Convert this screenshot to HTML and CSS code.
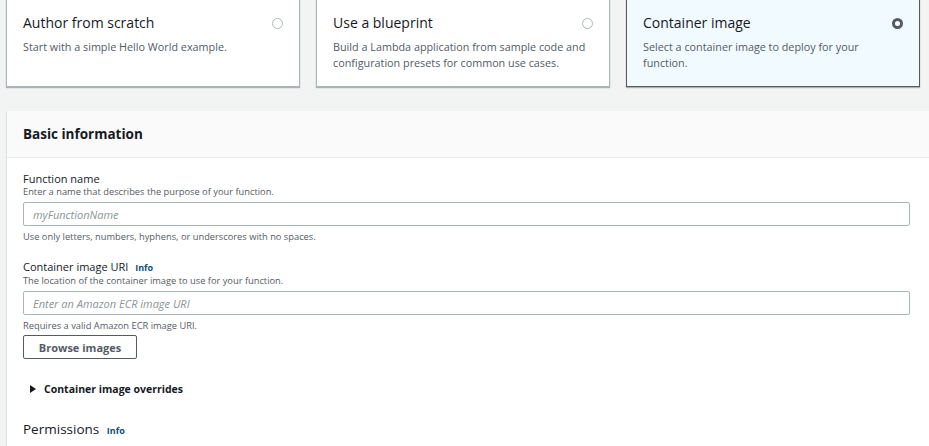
FILE: index.html
```html
<!DOCTYPE html>
<html lang="en">
<head>
<meta charset="utf-8">
<title>Create function</title>
<link rel="stylesheet" href="styles.css">
</head>
<body>
<div class="page">
  <div class="options">
    <div class="card">
      <div class="card-head">
        <span class="card-title">Author from scratch</span>
        <span class="radio"></span>
      </div>
      <p class="card-desc">Start with a simple Hello World example.</p>
    </div>
    <div class="card">
      <div class="card-head">
        <span class="card-title">Use a blueprint</span>
        <span class="radio"></span>
      </div>
      <p class="card-desc">Build a Lambda application from sample code and configuration presets for common use cases.</p>
    </div>
    <div class="card card-selected">
      <div class="card-head">
        <span class="card-title">Container image</span>
        <span class="radio radio-on"></span>
      </div>
      <p class="card-desc">Select a container image to deploy for your function.</p>
    </div>
  </div>

  <section class="panel">
    <header class="panel-head">Basic information</header>
    <div class="panel-body">
      <div class="field">
        <div class="label">Function name</div>
        <div class="desc">Enter a name that describes the purpose of your function.</div>
        <div class="input"><span class="ph">myFunctionName</span></div>
        <div class="hint">Use only letters, numbers, hyphens, or underscores with no spaces.</div>
      </div>
      <div class="field field-2">
        <div class="label">Container image URI <span class="info">Info</span></div>
        <div class="desc">The location of the container image to use for your function.</div>
        <div class="input"><span class="ph">Enter an Amazon ECR image URI</span></div>
        <div class="hint">Requires a valid Amazon ECR image URI.</div>
        <button class="btn">Browse images</button>
      </div>
      <div class="expander"><span class="caret"></span>Container image overrides</div>
      <div class="section-title">Permissions <span class="info">Info</span></div>
      <div class="section-desc">By default, Lambda will create an execution role with permissions to upload logs to Amazon CloudWatch Logs.</div>
    </div>
  </section>
</div>
</body>
</html>
```

FILE: styles.css
```css
html, body {
  margin: 0;
  padding: 0;
}
body {
  background: #f2f3f3;
  font-family: "Open Sans", "Liberation Sans", sans-serif;
  color: #16191f;
  overflow: hidden;
  width: 929px;
  height: 446px;
}
.page {
  display: flex;
  flex-direction: column;
}
.options {
  display: grid;
  grid-template-columns: 294px 294px 294px;
  gap: 16px;
  margin-top: -12px;
  padding-left: 6px;
}
.card {
  background: #fff;
  border: 1px solid #aab7b8;
  box-shadow: 0 1px 1px rgba(0, 28, 36, 0.3);
  padding: 24px 16px 15px 16px;
}
.card-selected {
  background: #f1faff;
  border-color: #545b64;
}
.card-head {
  display: flex;
  justify-content: space-between;
  align-items: center;
  height: 20px;
}
.card-title {
  font-size: 14px;
  line-height: 20px;
  color: #16191f;
}
.radio {
  width: 9px;
  height: 9px;
  border: 1px solid #aab7b8;
  border-radius: 50%;
  background: #fff;
}
.radio-on {
  width: 5px;
  height: 5px;
  border: 3px solid #545b64;
}
.card-desc {
  margin: 6px 0 0;
  font-size: 10.8px;
  line-height: 16px;
  color: #545b64;
}
.panel {
  margin: 24px -12px 0 7px;
  background: #fff;
  box-shadow: 0 1px 1px rgba(0, 28, 36, 0.3), -1px 0 0 #eaeded;
}
.panel-head {
  height: 46px;
  display: flex;
  align-items: center;
  padding: 0 16px;
  background: #fafafa;
  border-bottom: 1px solid #eaeded;
  font-weight: 700;
  font-size: 13.5px;
}
.panel-body {
  padding: 14px 31px 0 16px;
}
.label {
  font-size: 11px;
  line-height: 14px;
  color: #16191f;
}
.desc, .hint {
  font-size: 9.3px;
  line-height: 11px;
  color: #545b64;
}
.input {
  margin-top: 5px;
  height: 22px;
  border: 1px solid #aab7b8;
  border-radius: 2px;
  display: flex;
  align-items: center;
  padding: 0 9px;
  background: #fff;
}
.ph {
  font-style: italic;
  font-size: 11px;
  color: #879596;
}
.hint {
  margin-top: 5px;
}
.field-2 {
  margin-top: 18px;
}
.info {
  font-size: 9px;
  font-weight: 700;
  color: #0d4f7c;
  margin-left: 4px;
}
.btn {
  display: block;
  margin-top: 4px;
  width: 114px;
  height: 24px;
  border: 1px solid #545b64;
  border-radius: 2px;
  background: #fff;
  font-family: inherit;
  font-weight: 700;
  font-size: 11px;
  color: #545b64;
  padding: 0;
}
.expander {
  margin-top: 22px;
  display: flex;
  align-items: center;
  font-size: 10.5px;
  font-weight: 700;
  line-height: 16px;
  color: #16191f;
  padding-left: 7px;
}
.caret {
  width: 0;
  height: 0;
  border-top: 4px solid transparent;
  border-bottom: 4px solid transparent;
  border-left: 6px solid #16191f;
  margin-right: 8px;
}
.section-title {
  margin-top: 22px;
  font-size: 13.5px;
  line-height: 20px;
}
.section-desc {
  margin-top: 4px;
  font-size: 9.3px;
  line-height: 12px;
  color: #545b64;
  white-space: nowrap;
}
```
